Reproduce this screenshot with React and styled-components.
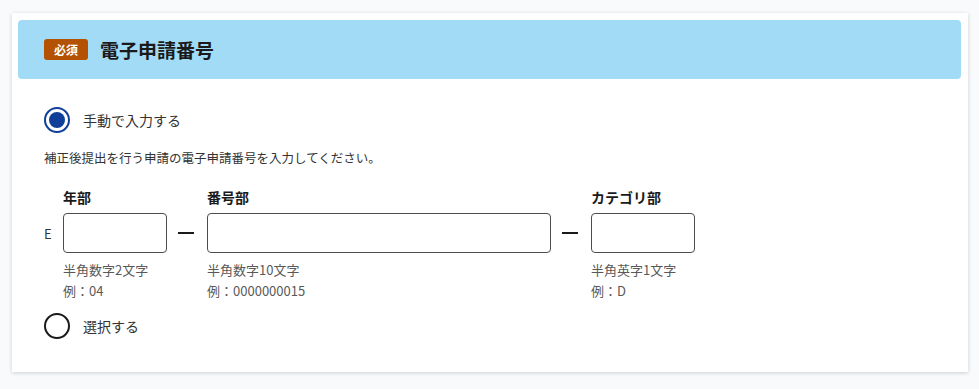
import styled, { createGlobalStyle } from "styled-components";
import { useState } from "react";

const GlobalStyle = createGlobalStyle`
  body {
    margin: 0;
    background-color: #f9fafc;
    font-family: "Noto Sans CJK JP", "Noto Sans", sans-serif;
    color: #1a1a1a;
  }
`;

const Page = styled.div`
  padding: 13px 11px 17px 12px;
`;

const Card = styled.section`
  background-color: #ffffff;
  padding: 7px 7px 33px 6px;
  box-shadow: 0 1px 4px rgba(0, 0, 0, 0.18);
`;

const Header = styled.div`
  display: flex;
  align-items: center;
  gap: 12px;
  height: 59px;
  padding-left: 26px;
  border-radius: 4px;
  background-color: #a2dbf5;
`;

const Badge = styled.span`
  display: inline-flex;
  align-items: center;
  justify-content: center;
  width: 44px;
  height: 21px;
  border-radius: 3px;
  background-color: #b35200;
  color: #ffffff;
  font-size: 12px;
  font-weight: 700;
  line-height: 1;
`;

const Title = styled.h2`
  margin: 0;
  font-size: 19px;
  font-weight: 700;
  color: #1a1a1a;
`;

const Body = styled.div`
  padding: 28px 0 0 26px;
`;

const RadioRow = styled.label`
  display: flex;
  align-items: center;
  gap: 13px;
  font-size: 14px;
  color: #333333;
  cursor: pointer;
`;

const RadioCircle = styled.span`
  box-sizing: border-box;
  width: 26px;
  height: 26px;
  border-radius: 50%;
  border: 2px solid ${({ $checked }) => ($checked ? "#0f3f99" : "#1a1a1a")};
  display: flex;
  align-items: center;
  justify-content: center;

  &::after {
    content: "";
    width: 16px;
    height: 16px;
    border-radius: 50%;
    background-color: ${({ $checked }) => ($checked ? "#0f3f99" : "transparent")};
  }
`;

const Description = styled.p`
  margin: 15px 0 0;
  font-size: 12.5px;
  line-height: 20px;
  color: #333333;
`;

const FieldGrid = styled.div`
  display: grid;
  grid-template-columns: 19px 104px 40px 344px 40px 104px;
  grid-template-rows: 20px 40px auto;
  row-gap: 6px;
  margin: 19px 0 12px;
  align-items: center;
`;

const FieldLabel = styled.span`
  grid-row: 1;
  grid-column: ${({ $col }) => $col};
  font-size: 14px;
  font-weight: 700;
  color: #1a1a1a;
  line-height: 20px;
  margin-bottom: 1px;
`;

const Prefix = styled.span`
  grid-row: 2;
  grid-column: 1;
  font-size: 13px;
  color: #333333;
`;

const TextBox = styled.input`
  grid-row: 2;
  grid-column: ${({ $col }) => $col};
  box-sizing: border-box;
  width: 100%;
  height: 40px;
  border: 1px solid #4d4d4d;
  border-radius: 4px;
  padding: 0 10px;
  font-size: 15px;
  font-family: inherit;
  outline: none;
  background: #ffffff;
`;

const Dash = styled.span`
  grid-row: 2;
  grid-column: ${({ $col }) => $col};
  justify-self: center;
  width: 16px;
  height: 2px;
  margin-left: -2px;
  background-color: #1a1a1a;
`;

const Hint = styled.div`
  grid-row: 3;
  grid-column: ${({ $col }) => $col} / span 2;
  align-self: start;
  font-size: 13px;
  line-height: 21px;
  color: #595959;
`;

const fields = [
  { col: 2, label: "年部", hint: "半角数字2文字", example: "04" },
  { col: 4, label: "番号部", hint: "半角数字10文字", example: "0000000015" },
  { col: 6, label: "カテゴリ部", hint: "半角英字1文字", example: "D" },
];

export default function App() {
  const [mode, setMode] = useState("manual");
  const [values, setValues] = useState({ 2: "", 4: "", 6: "" });

  return (
    <Page>
      <GlobalStyle />
      <Card>
        <Header>
          <Badge>必須</Badge>
          <Title>電子申請番号</Title>
        </Header>
        <Body>
          <RadioRow onClick={() => setMode("manual")}>
            <RadioCircle $checked={mode === "manual"} />
            手動で入力する
          </RadioRow>
          <Description>補正後提出を行う申請の電子申請番号を入力してください。</Description>
          <FieldGrid>
            <Prefix>E</Prefix>
            {fields.map((f) => (
              <FieldLabel key={`l${f.col}`} $col={f.col}>
                {f.label}
              </FieldLabel>
            ))}
            {fields.map((f) => (
              <TextBox
                key={`i${f.col}`}
                $col={f.col}
                value={values[f.col]}
                onChange={(e) => setValues({ ...values, [f.col]: e.target.value })}
              />
            ))}
            <Dash $col={3} />
            <Dash $col={5} />
            {fields.map((f) => (
              <Hint key={`h${f.col}`} $col={f.col}>
                {f.hint}
                <br />
                例：{f.example}
              </Hint>
            ))}
          </FieldGrid>
          <RadioRow onClick={() => setMode("select")}>
            <RadioCircle $checked={mode === "select"} />
            選択する
          </RadioRow>
        </Body>
      </Card>
    </Page>
  );
}
